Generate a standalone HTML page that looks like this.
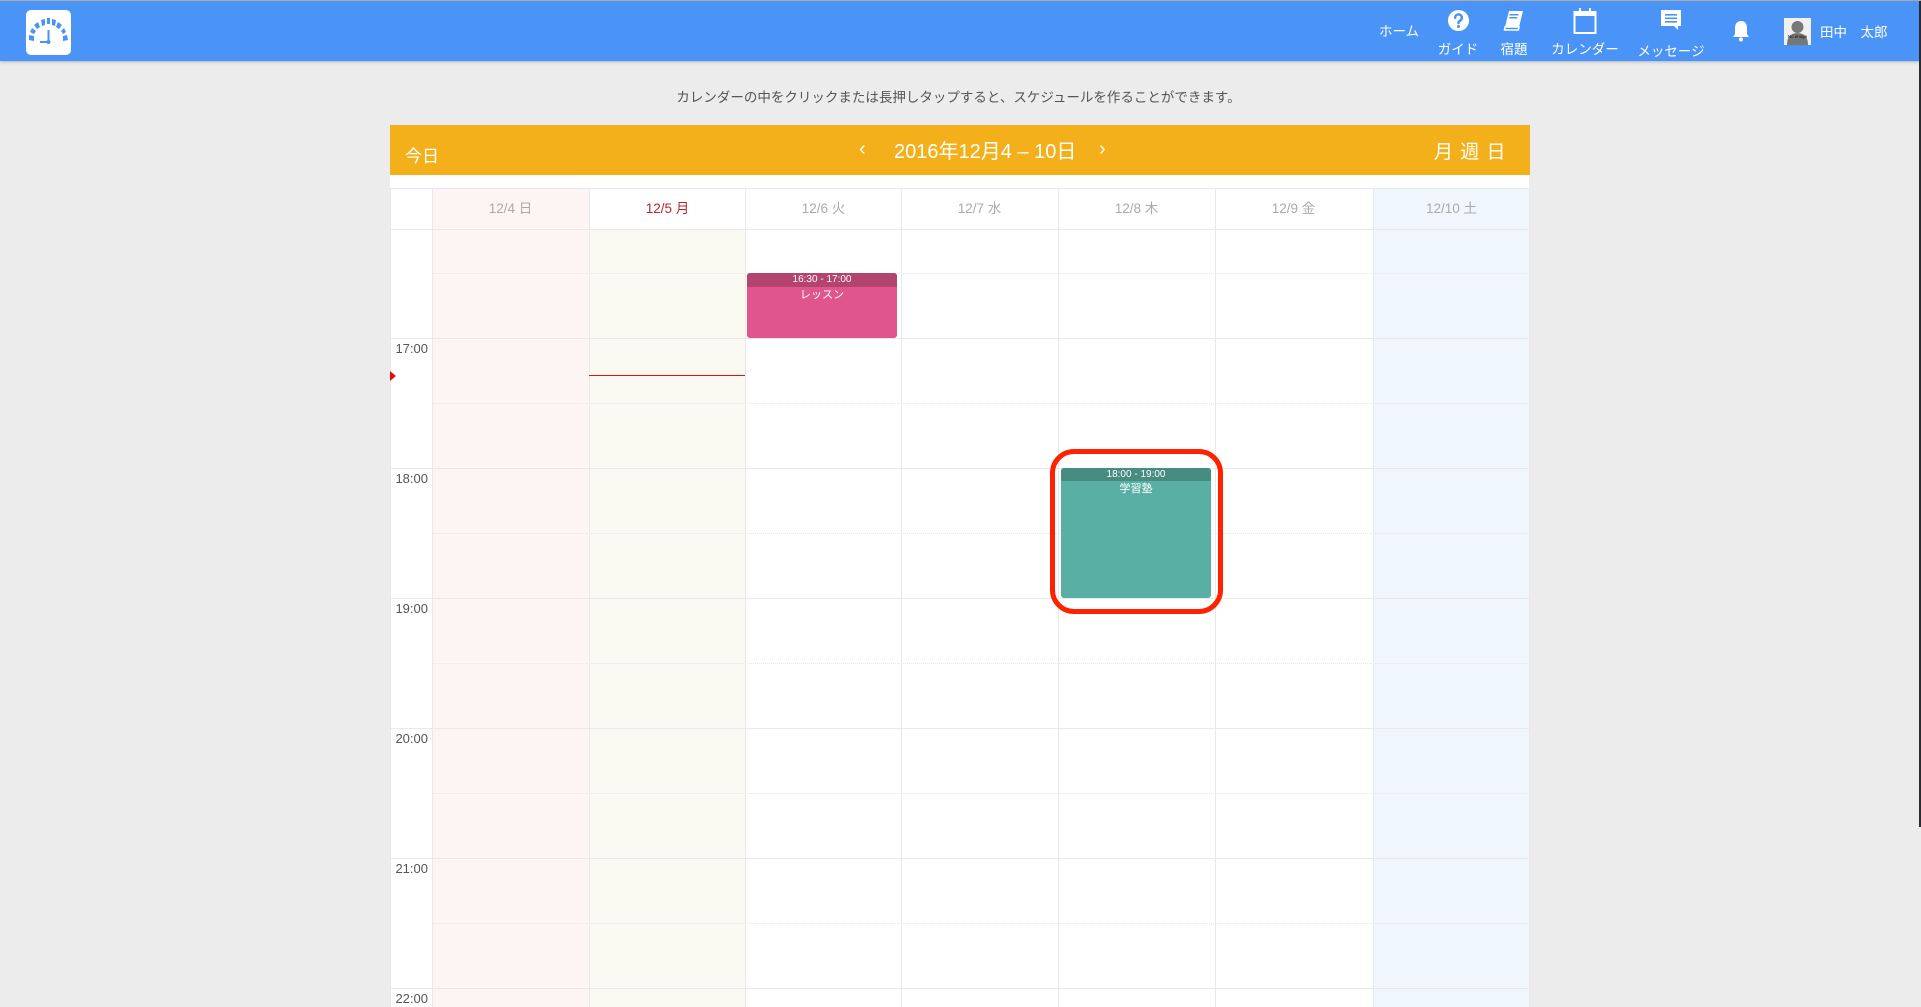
<!DOCTYPE html>
<html><head><meta charset="utf-8">
<style>
*{margin:0;padding:0;box-sizing:border-box}
html,body{width:1921px;height:1007px;overflow:hidden;background:#ececec;font-family:"Liberation Sans","Noto Sans CJK JP",sans-serif;position:relative}
.a{position:absolute}
.hdr{left:0;top:0;width:1921px;height:61px;background:#4a94f8;border-top:1px solid #a8a8a8;box-shadow:0 1px 3px rgba(0,0,0,.25)}
.nav{color:#fff;font-size:13.5px;white-space:nowrap;transform:translateX(-50%)}
.vl{width:1px;background:#e9e9e9}
.hl{height:1px;left:390px;width:1140px;background:#e9e9e9}
.hd{height:0;left:432px;width:1098px;border-top:1px dotted #e6e6e6}
.dh{top:188px;height:41px;line-height:41px;text-align:center;font-size:13.5px;color:#aaa;width:157px}
.tl{left:390px;width:38px;text-align:right;font-size:13px;color:#555}
</style></head><body>
<div class="a hdr"></div>
<div class="a" style="left:26px;top:10px;width:45px;height:45px;background:#fff;border-radius:5px">
<svg width="45" height="45" viewBox="0 0 45 45"><g fill="#4a94f8">
<path d="M3 30 L3 25 L8 26 L8 31Z"/><path d="M4 22 L6 18 L10 21 L8 24Z"/><path d="M8 15 L12 12 L14 17 L11 19Z"/><path d="M15 10 L19 9 L19 15 L16 16Z"/><path d="M21 8 L24 8 L24 14 L21 14Z"/><path d="M26 9 L30 10 L29 16 L26 15Z"/><path d="M32 12 L36 15 L33 19 L30 17Z"/><path d="M38 18 L40 22 L37 24 L35 21Z"/><path d="M41 25 L42 30 L37 31 L37 26Z"/>
<rect x="21.5" y="20" width="2" height="12"/><rect x="14" y="31" width="9" height="2"/><circle cx="22.5" cy="32" r="2"/></g></svg></div>
<div class="a nav" style="left:1399px;top:20px">ホーム</div>
<svg class="a" style="left:1447px;top:9px" width="23" height="23" viewBox="0 0 24 24"><circle cx="12" cy="12" r="11" fill="#fff"/><path d="M8.5 9.2a3.5 3.5 0 1 1 5 3.1c-1 .6-1.5 1.1-1.5 2.4" stroke="#4a94f8" stroke-width="2.6" fill="none" stroke-linecap="round"/><circle cx="12" cy="18.3" r="1.6" fill="#4a94f8"/></svg>
<div class="a nav" style="left:1458px;top:38px">ガイド</div>
<svg class="a" style="left:1502px;top:9px" width="24" height="24" viewBox="0 0 24 24"><path d="M7 2h14l-4 16H3z" fill="#fff"/><path d="M3 18 H17 L16.3 21 H2.6 Z" fill="none" stroke="#fff" stroke-width="1.6"/><rect x="9" y="5" width="9" height="1.5" fill="#4a94f8" transform="skewX(-14)"/><rect x="9.5" y="8" width="8" height="1.5" fill="#4a94f8" transform="skewX(-14)"/></svg>
<div class="a nav" style="left:1514px;top:38px">宿題</div>
<svg class="a" style="left:1573px;top:7px" width="24" height="28" viewBox="0 0 24 28"><rect x="1.5" y="5" width="21" height="21" fill="none" stroke="#fff" stroke-width="2"/><rect x="1.5" y="5" width="21" height="4" fill="#fff"/><rect x="6" y="1" width="2" height="7" fill="#fff"/><rect x="16" y="1" width="2" height="7" fill="#fff"/></svg>
<div class="a nav" style="left:1585px;top:38px">カレンダー</div>
<svg class="a" style="left:1661px;top:10px" width="20" height="21" viewBox="0 0 20 21"><path d="M0 0h20v16h-3v4l-4-4H0z" fill="#fff"/><rect x="4" y="4" width="12" height="1.6" fill="#4a94f8"/><rect x="4" y="7.5" width="12" height="1.6" fill="#4a94f8"/><rect x="4" y="11" width="12" height="1.6" fill="#4a94f8"/></svg>
<div class="a nav" style="left:1671px;top:40px">メッセージ</div>
<svg class="a" style="left:1732px;top:20px" width="18" height="22" viewBox="0 0 18 22"><path d="M9 1c-4 0-6 3-6 7v6l-2 3h16l-2-3V8c0-4-2-7-6-7z" fill="#fff"/><circle cx="9" cy="19.5" r="2" fill="#fff"/></svg>
<div class="a" style="left:1784px;top:18px;width:27px;height:27px;background:#f0f0f0"><svg width="27" height="27"><circle cx="13.5" cy="9" r="6" fill="#777"/><path d="M3 27 Q3 15 13.5 15 Q24 15 24 27Z" fill="#777"/><text x="13.5" y="20" font-size="4.5" text-anchor="middle" fill="#111" font-family="Liberation Sans">No image</text></svg></div>
<div class="a" style="left:1820px;top:21px;color:#fff;font-size:13.5px;white-space:nowrap">田中　太郎</div>
<div class="a" style="left:1919px;top:1px;width:2px;height:826px;background:#2a2a33"></div>

<div class="a" style="left:0;width:1917px;top:86px;text-align:center;font-size:13.5px;color:#555">カレンダーの中をクリックまたは長押しタップすると、スケジュールを作ることができます。</div>

<div class="a" style="left:390px;top:125px;width:1140px;height:882px;background:#fff"></div>
<div class="a" style="left:390px;top:125px;width:1140px;height:50px;background:#f4b01b"></div>
<div class="a" style="left:405px;top:142px;color:#fff;font-size:17px">今日</div>
<div class="a" style="left:859px;top:138px;color:#fff;font-size:20px">‹</div>
<div class="a" style="left:894px;top:135px;color:#fff;font-size:20px;white-space:nowrap">2016年12月4 – 10日</div>
<div class="a" style="left:1099px;top:138px;color:#fff;font-size:20px">›</div>
<div class="a" style="left:1434px;top:137px;color:#fff;font-size:19px;letter-spacing:1px;white-space:nowrap">月 週 日</div>

<div class="a" style="left:432px;top:188px;width:157px;height:819px;background:#fdf4f4"></div>
<div class="a" style="left:589px;top:229px;width:156px;height:778px;background:#fafaf2"></div>
<div class="a" style="left:1373px;top:188px;width:157px;height:819px;background:#f0f6fd"></div>

<div class="a hl" style="top:188px"></div>
<div class="a hl" style="top:229px"></div>
<div class="a hd" style="top:273px"></div>
<div class="a hl" style="top:338px"></div>
<div class="a hd" style="top:403px"></div>
<div class="a hl" style="top:468px"></div>
<div class="a hd" style="top:533px"></div>
<div class="a hl" style="top:598px"></div>
<div class="a hd" style="top:663px"></div>
<div class="a hl" style="top:728px"></div>
<div class="a hd" style="top:793px"></div>
<div class="a hl" style="top:858px"></div>
<div class="a hd" style="top:923px"></div>
<div class="a hl" style="top:988px"></div>

<div class="a vl" style="left:390px;top:188px;height:819px"></div>
<div class="a vl" style="left:432px;top:188px;height:819px"></div>
<div class="a vl" style="left:589px;top:188px;height:819px"></div>
<div class="a vl" style="left:745px;top:188px;height:819px"></div>
<div class="a vl" style="left:901px;top:188px;height:819px"></div>
<div class="a vl" style="left:1058px;top:188px;height:819px"></div>
<div class="a vl" style="left:1215px;top:188px;height:819px"></div>
<div class="a vl" style="left:1373px;top:188px;height:819px"></div>
<div class="a vl" style="left:1529px;top:175px;height:832px"></div>

<div class="a dh" style="left:432px">12/4 日</div>
<div class="a dh" style="left:589px;color:#b5272d">12/5 月</div>
<div class="a dh" style="left:745px">12/6 火</div>
<div class="a dh" style="left:901px">12/7 水</div>
<div class="a dh" style="left:1058px">12/8 木</div>
<div class="a dh" style="left:1215px">12/9 金</div>
<div class="a dh" style="left:1373px">12/10 土</div>

<div class="a tl" style="top:341px">17:00</div>
<div class="a tl" style="top:471px">18:00</div>
<div class="a tl" style="top:601px">19:00</div>
<div class="a tl" style="top:731px">20:00</div>
<div class="a tl" style="top:861px">21:00</div>
<div class="a tl" style="top:991px">22:00</div>

<div class="a" style="left:589px;top:375px;width:156px;height:1px;background:#e01010"></div>
<div class="a" style="left:390px;top:371px;width:0;height:0;border-top:5px solid transparent;border-bottom:5px solid transparent;border-left:6px solid #e01010"></div>

<div class="a" style="left:747px;top:273px;width:150px;height:65px;background:#e0558e;border-radius:3px;overflow:hidden;color:#fff;text-align:center">
<div style="height:14px;background:#b3446d;font-size:10px;line-height:14px">16:30 - 17:00</div>
<div style="font-size:11px;line-height:16px">レッスン</div></div>

<div class="a" style="left:1061px;top:468px;width:150px;height:130px;background:#5aafa4;border-radius:3px;overflow:hidden;color:#fff;text-align:center">
<div style="height:13px;background:#468c80;font-size:10px;line-height:13px">18:00 - 19:00</div>
<div style="font-size:11px;line-height:16px">学習塾</div></div>
<div class="a" style="left:1050px;top:449px;width:173px;height:165px;border:5px solid #ff2200;border-radius:24px"></div>
</body></html>
